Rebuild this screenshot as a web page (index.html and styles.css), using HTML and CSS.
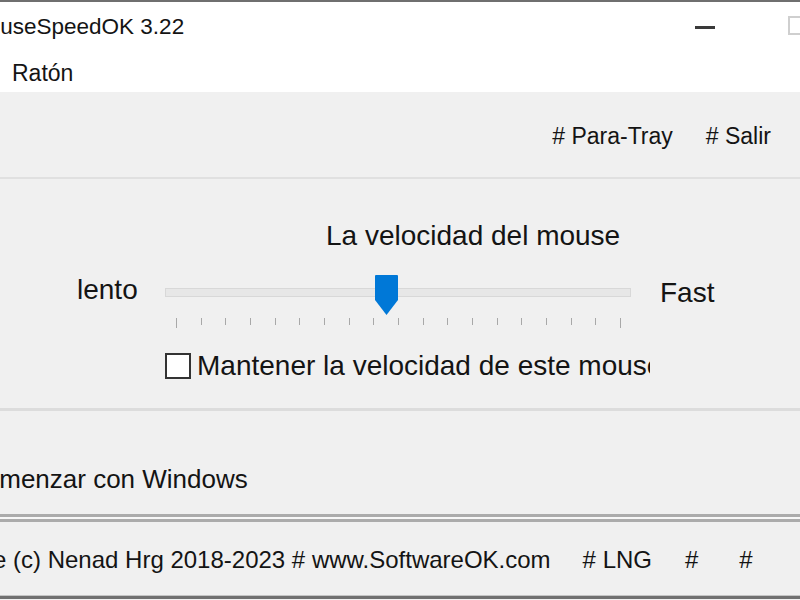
FILE: index.html
```html
<!DOCTYPE html>
<html lang="es">
<head>
    <meta charset="UTF-8">
    <meta name="viewport" content="width=device-width, initial-scale=1.0">
    <title>MouseSpeedOK 3.22</title>
    <link rel="stylesheet" href="styles.css">
</head>
<body>
    <div class="window">
        <!-- Title bar -->
        <div class="titlebar">
            <span class="title">MouseSpeedOK 3.22</span>
            <span class="btn-min"></span>
            <span class="btn-max"></span>
        </div>

        <div class="menubar">
            <span class="menu-item">Ratón</span>
        </div>

        <div class="toolbar">
            <span class="tool-link"># Para-Tray</span>
            <span class="tool-link"># Salir</span>
        </div>

        <div class="sep"></div>

        <!-- Speed panel -->
        <div class="speed">
            <div class="speed-title">La velocidad del mouse</div>
            <div class="slider-row">
                <span class="lento">lento</span>
                <div class="slider">
                    <div class="track"></div>
                    <svg class="thumb" width="23" height="40" viewBox="0 0 23 40">
                        <path d="M1 0 H22 Q23 0 23 1 V25 L11.5 40 L0 25 V1 Q0 0 1 0 Z" fill="#0078d7"/>
                    </svg>
                    <div class="ticks">
                        <span class="tick tick-end"></span>
                        <span class="tick"></span><span class="tick"></span><span class="tick"></span>
                        <span class="tick"></span><span class="tick"></span><span class="tick"></span>
                        <span class="tick"></span><span class="tick"></span><span class="tick"></span>
                        <span class="tick"></span><span class="tick"></span><span class="tick"></span>
                        <span class="tick"></span><span class="tick"></span><span class="tick"></span>
                        <span class="tick"></span><span class="tick"></span>
                        <span class="tick tick-end"></span>
                    </div>
                </div>
                <span class="fast">Fast</span>
            </div>
            <label class="keep">
                <span class="box"></span>
                <span class="keep-text">Mantener la velocidad de este mouse</span>
            </label>
        </div>

        <div class="sep sep-low"></div>

        <div class="startup">
            <span class="startup-text">Comenzar con Windows</span>
        </div>

        <div class="double-line"></div>

        <div class="footer">
            <span class="copy">Freeware (c) Nenad Hrg 2018-2023 # www.SoftwareOK.com</span>
            <span class="lng"># LNG</span>
            <span class="hash1">#</span>
            <span class="hash2">#</span>
        </div>
    </div>
</body>
</html>
```

FILE: styles.css
```css
body {
    margin: 0;
    width: 800px;
    height: 600px;
    overflow: hidden;
    font-family: "Liberation Sans", Arial, sans-serif;
    color: #141414;
    background: #f0f0f0;
}
.window {
    display: flex;
    flex-direction: column;
    height: 600px;
    border-top: 2px solid #6f6f6f;
    box-sizing: border-box;
    overflow: hidden;
}
.titlebar {
    display: flex;
    align-items: center;
    height: 50px;
    flex-shrink: 0;
    background: #fff;
}
.title {
    margin-left: -31px;
    font-size: 22.5px;
    white-space: nowrap;
}
.btn-min {
    margin-left: auto;
    width: 20px;
    height: 3px;
    background: #3a3a3a;
}
.btn-max {
    margin-left: 73px;
    margin-right: -7px;
    width: 19px;
    height: 19px;
    border: 2px solid #cfcfcf;
    box-sizing: border-box;
    margin-top: -3px;
}
.menubar {
    display: flex;
    align-items: center;
    height: 40px;
    flex-shrink: 0;
    background: #fff;
    padding: 2px 0 0 12px;
    box-sizing: border-box;
    font-size: 23px;
}
.toolbar {
    display: flex;
    justify-content: flex-end;
    align-items: center;
    gap: 33px;
    height: 85px;
    flex-shrink: 0;
    box-sizing: border-box;
    padding: 3px 29px 0 0;
    font-size: 23px;
}
.sep {
    height: 2px;
    flex-shrink: 0;
    background: #e0e0e0;
}
.sep-low {
    height: 3px;
    background: #dcdcdc;
}
.speed {
    height: 229px;
    flex-shrink: 0;
    box-sizing: border-box;
    padding-top: 41px;
    font-size: 28px;
}
.speed-title {
    margin-left: 326px;
    line-height: 32px;
    white-space: nowrap;
}
.slider-row {
    display: flex;
    align-items: flex-start;
    margin-top: 16px;
    height: 60px;
}
.lento {
    width: 88px;
    margin-left: 77px;
    margin-top: 6px;
    line-height: 32px;
}
.slider {
    position: relative;
    width: 466px;
    height: 60px;
}
.track {
    margin-top: 20px;
    height: 9px;
    background: #e7e7e7;
    border: 1px solid #d8d8d8;
    box-sizing: border-box;
}
.thumb {
    position: absolute;
    left: 210px;
    top: 7px;
}
.ticks {
    display: flex;
    justify-content: space-between;
    align-items: flex-start;
    width: 445px;
    margin: 21px 0 0 11px;
}
.tick {
    width: 1px;
    height: 7px;
    background: #a8a8a8;
}
.tick-end {
    height: 10px;
}
.fast {
    margin-left: 29px;
    margin-top: 9px;
    line-height: 32px;
}
.keep {
    display: flex;
    align-items: center;
    margin: 25px 0 0 165px;
    height: 26px;
}
.box {
    width: 26px;
    height: 26px;
    box-sizing: border-box;
    border: 2px solid #333;
    background: #fff;
    flex-shrink: 0;
}
.keep-text {
    margin-left: 6px;
    width: 453px;
    overflow: hidden;
    white-space: nowrap;
    line-height: 32px;
}
.startup {
    height: 103px;
    flex-shrink: 0;
    box-sizing: border-box;
    padding-top: 53px;
    font-size: 26px;
    line-height: 30px;
}
.startup-text {
    display: inline-block;
    margin-left: -34px;
    white-space: nowrap;
}
.double-line {
    height: 2px;
    flex-shrink: 0;
    border-top: 3px solid #ababab;
    border-bottom: 3px solid #ababab;
    background: #f7f7f7;
}
.footer {
    display: flex;
    align-items: center;
    height: 74px;
    flex-shrink: 0;
    box-sizing: border-box;
    padding-top: 3px;
    font-size: 24px;
    white-space: nowrap;
    border-bottom: 1px solid #c4c4c4;
}
.copy {
    margin-left: -95px;
}
.lng {
    margin-left: 32px;
}
.hash1 {
    margin-left: 33px;
}
.hash2 {
    margin-left: 41px;
}
.window::after {
    content: "";
    height: 3px;
    flex-shrink: 0;
    background: #707070;
}
```
